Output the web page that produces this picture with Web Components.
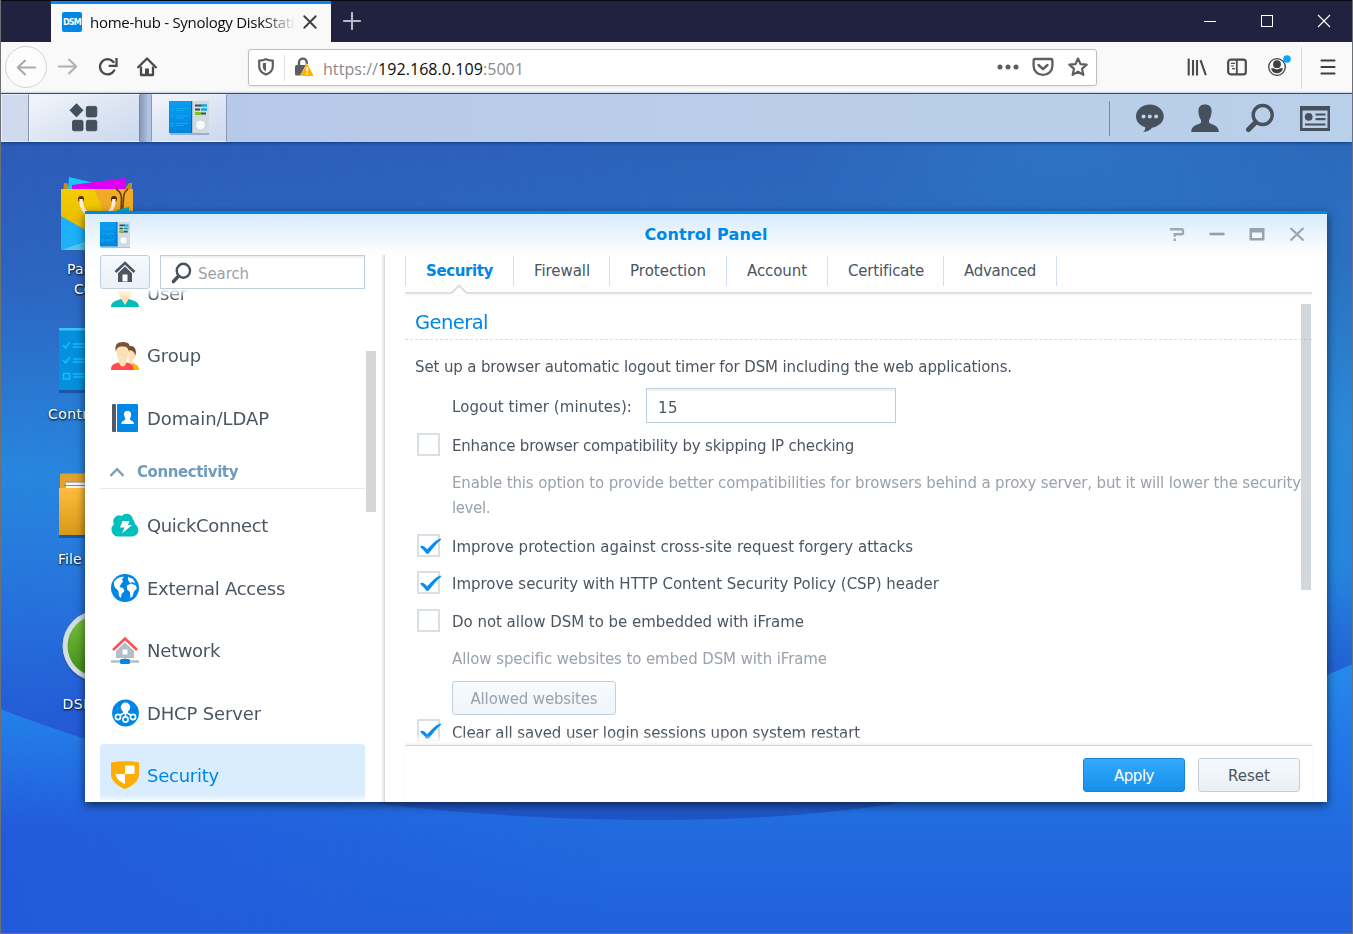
<!DOCTYPE html>
<html lang="en">
<head>
<meta charset="utf-8">
<title>home-hub - Synology DiskStation</title>
<style>
html,body{margin:0;padding:0;height:100%;overflow:hidden}
body{font-family:"DejaVu Sans",Verdana,sans-serif;background:#6d7075}
</style>
</head>
<body>
<browser-frame></browser-frame>
<script>
const make = (name, css, html) => customElements.define(name, class extends HTMLElement {
  connectedCallback() {
    if (this.shadowRoot) return;
    const root = this.attachShadow({ mode: 'open' });
    root.innerHTML = `<style>${css}</style>` + (typeof html === 'function' ? html(this) : html);
  }
});

/* ---------- icons ---------- */
const CP = `<defs><linearGradient id="g" x2="0" y2="1"><stop stop-color="#0b9cf0"/><stop offset="1" stop-color="#0086dd"/></linearGradient></defs>
<rect x="1" y="32" width="39" height="2" fill="#1e5f9a" opacity=".35"/><rect x="0" y="0" width="40" height="32" fill="#d3dade"/><rect x="0" y="0" width="23" height="32" fill="url(#g)"/><rect x="22" width="1.2" height="32" fill="#0667ae"/>
<path d="M2 8l1.500 1.500 2-3M2 15l1.500 1.500 2-3M2 22.500h3v3h-3zM7 7.500h13M7 9.500h9M7 15h12M7 17h8M7 22.500h12M7 24.500h8" stroke="#10b3f3" fill="none" stroke-width=".8"/>
<path d="M26 4.500h7M26 8.500h5M26 12.500h11" stroke="#3b4c55" stroke-width="2.200"/><path d="M32 4.500h6M32 8.500h6" stroke="#08a9ee" stroke-width="2.500"/><path d="M26 12.500h6" stroke="#6bd600" stroke-width="2.500"/><circle cx="31.500" cy="24" r="4.800" fill="#f4fbff" stroke="#bfcdd6" stroke-width=".6"/>`;
const ICONS = {
  back: [24,24,`<path d="M22 12H3M11 4l-8 8 8 8" fill="none" stroke="#a9a9aa" stroke-width="2.200" stroke-linecap="round" stroke-linejoin="round"/>`],
  fwd: [24,24,`<path d="M2 12h19M13 4l8 8-8 8" fill="none" stroke="#b1b1b3" stroke-width="2.200" stroke-linecap="round" stroke-linejoin="round"/>`],
  reload: [20,20,`<path d="M16.200 13.500A7.600 7.600 0 1 1 15.500 5" fill="none" stroke="#4a4a4d" stroke-width="2.400" stroke-linecap="round"/><path d="M18.500 1v7.800h-7.800" fill="none" stroke="#4a4a4d" stroke-width="2.300"/>`],
  home: [20,20,`<path d="M1.200 10.200L10 1.500l8.800 8.700" fill="none" stroke="#4a4a4d" stroke-width="2.300" stroke-linecap="round" stroke-linejoin="round"/><path d="M4 9.500V18h12V9.500" fill="none" stroke="#4a4a4d" stroke-width="2.300" stroke-linejoin="round"/><path d="M8 19v-7.500h4V19z" fill="#4a4a4d"/>`],
  shield: [16,18,`<path d="M8 1.100C6 2.300 3.600 2.600 1.200 2.600v5.600c0 4 2.300 6.600 6.800 8.400 4.500-1.800 6.800-4.400 6.800-8.400V2.600C12.400 2.600 10 2.300 8 1.100z" fill="none" stroke="#5e5e61" stroke-width="2.200" stroke-linejoin="round"/><path d="M8 4.700v8.700c-2-1.200-3.200-2.600-3.200-5V5.200z" fill="#5e5e61"/>`],
  lock: [20,20,`<path d="M5 9V5.500a3.900 3.900 0 0 1 7.800 0V8" fill="none" stroke="#5e5e61" stroke-width="2.400"/><rect x="1" y="8" width="12" height="10.500" rx="1.600" fill="#5e5e61"/><path d="M13 7.300L19 18.400H7.200z" fill="#ffb000" stroke="#fff" stroke-width="1.500" paint-order="stroke" stroke-linejoin="round"/><path d="M13 7.500L18.800 18.300H7.300z" fill="#ffb000" stroke="#ffb000" stroke-linejoin="round"/><path d="M13.100 10v4.400M13.100 15.800v1.500" stroke="#fff" stroke-width="1.600"/>`],
  dots: [22,6,`<circle cx="3" cy="3" r="2.500" fill="#5e5e61"/><circle cx="11" cy="3" r="2.500" fill="#5e5e61"/><circle cx="19" cy="3" r="2.500" fill="#5e5e61"/>`],
  pocket: [22,20,`<path d="M3 2h16a1.400 1.400 0 0 1 1.400 1.400V9A9.400 8.900 0 0 1 1.600 9V3.400A1.400 1.400 0 0 1 3 2z" fill="none" stroke="#5e5e61" stroke-width="2.300"/><path d="M6.500 8l4.500 4.200L15.500 8" fill="none" stroke="#5e5e61" stroke-width="2.400" stroke-linecap="round" stroke-linejoin="round"/>`],
  star: [22,22,`<path d="M11 2.400l2.500 5.700 6.200.6-4.700 4.100 1.400 6.100L11 15.700l-5.400 3.200L7 12.800 2.300 8.700l6.200-.6z" fill="none" stroke="#5e5e61" stroke-width="2.200" stroke-linejoin="round"/>`],
  library: [20,18,`<path d="M1.700.5v17M6 2v15.500M10 2v15.500M13.500 2.200l5.300 15" stroke="#4a4a4f" stroke-width="2.100" fill="none"/>`],
  sidebar: [20,18,`<rect x="1.200" y="1.700" width="17.600" height="14.600" rx="2.400" fill="none" stroke="#4a4a4f" stroke-width="2.200"/><path d="M9.800 2v14" stroke="#4a4a4f" stroke-width="1.800"/><path d="M4 5.300h4M4 8h3M5 10.700h3" stroke="#4a4a4f" stroke-width="1.200"/>`],
  account: [26,26,`<circle cx="11" cy="15" r="8.300" fill="none" stroke="#3f3f42" stroke-width="1.300"/><circle cx="11" cy="12.200" r="3.900" fill="#3f3f42"/><path d="M5 16.300h2.600c2 1.500 4.800 1.500 6.800 0H17c-.6 3.300-3 5-6 5s-5.400-1.700-6-5z" fill="#3f3f42"/><circle cx="21" cy="7" r="3.800" fill="#00a8fb"/>`],
  burger: [16,18,`<path d="M1.500 2.500h13M1.500 9h13M1.500 15.500h13" stroke="#3f3f42" stroke-width="2.200" stroke-linecap="round"/>`],
  x: [14,14,`<path d="M2 2l10 10M12 2L2 12" stroke="#3f3f42" stroke-width="1.700" stroke-linecap="round"/>`],
  plus: [18,18,`<path d="M9 1v16M1 9h16" stroke="#b8b9c3" stroke-width="2.100" stroke-linecap="round"/>`],
  min: [14,14,`<path d="M1 7.500h12" stroke="#fff"/>`],
  max: [14,14,`<rect x="1.500" y="1.500" width="11" height="11" fill="none" stroke="#fff"/>`],
  close: [14,14,`<path d="M1 1l12 12M13 1L1 13" stroke="#fff" stroke-width="1.100"/>`],
  apps: [30,30,`<g fill="#444f5c" stroke="#39434d" stroke-width=".8"><path d="M7.500.7L14 7.300 7.500 13.900 1 7.300z" stroke-linejoin="round"/><rect x="17.300" y="3.400" width="10.500" height="10.500" rx="1.600"/><rect x="3.500" y="17.300" width="10.500" height="10.500" rx="1.600"/><rect x="17.300" y="17.300" width="10.500" height="10.500" rx="1.600"/></g>`],
  cp: [40,34,CP],
  chat: [30,30,`<path d="M14.800 1.500C22.500 1.500 28.700 6.700 28.700 13.200c0 6-5 10.200-11.700 11.500-2 2.400-4.500 4-9 4.200 1.800-1.200 2.400-2.800 2.300-4.700C4.500 22.400 1 18.400 1 13.200 1 6.700 7.100 1.500 14.800 1.500z" fill="#46515d"/><g fill="#bfd1ea"><circle cx="8.500" cy="13.500" r="2"/><circle cx="14.800" cy="13.500" r="2"/><circle cx="21.100" cy="13.500" r="2"/></g>`],
  person: [30,30,`<path d="M15 1.500c4.500 0 7 2.600 6.600 7.300-.3 4.300-1.600 6.700-2.600 8.200v2.500c1.500 2.200 9.800 2.200 9.800 9.500H1.200c0-7.300 8.300-7.300 9.800-9.500V17c-1-1.500-2.300-3.900-2.600-8.200C8 4.100 10.500 1.500 15 1.500z" fill="#46515d"/>`],
  search: [30,30,`<circle cx="17.700" cy="12" r="9.500" fill="none" stroke="#46515d" stroke-width="3.400"/><path d="M10.500 19.500l-7 7" stroke="#46515d" stroke-width="5" stroke-linecap="round"/>`],
  widget: [32,28,`<path d="M1 2h30v25H1z" fill="#46515d"/><path d="M3.500 6.500h25v17.500h-25z" fill="#bfd1ea"/><circle cx="9.700" cy="12.800" r="3.900" fill="#46515d"/><path d="M16.500 10.500h10M16.500 15.200h10M6 20.500h20.500" stroke="#46515d" stroke-width="2.200"/>`],
  sHome: [22,22,`<path d="M1.500 11L11 2l9.500 9" fill="none" stroke="#4b5661" stroke-width="2.600"/><path d="M4 12l7-6.600 7 6.600v9H4z" fill="#4b5661"/><path d="M3.500 12.200L11 5l7.500 7.200" fill="none" stroke="#dfe5ea" stroke-width=".9"/><rect x="8.500" y="13.500" width="5" height="7" fill="#fff"/>`],
  user: [28,28,`<path d="M0 28c0-5 4-6 10-8h8c6 2 10 3 10 8z" fill="#00bfb8"/><path d="M7 9c0-6 14-6 14 0 0 6-2 8-3 10.500L14 26l-4-6.500C9 17 7 15 7 9z" fill="#ffdfb5"/><path d="M6 9C5 0 23 0 22 9c-2-4-14-4-16 0z" fill="#7a5335"/>`],
  group: [28,28,`<path d="M17 28h11c0-4-2-5-6-7l-5 2z" fill="#ffb400"/><path d="M17 8c6-2 8 1 7 6-.5 4-3 4-2.500 8L18 26z" fill="#ffdfb5"/><path d="M16 5c7-3 10 2 8.500 9-1-4-3-6-7.500-6z" fill="#714c30"/><path d="M0 28c0-5 2-6 8-7.500h8c5 1.500 6.500 2.500 6.500 7.500z" fill="#ff4b50"/><path d="M5.500 7c0-5 12-5 12 0 0 6-1 8-2 10.500.2 4-1.500 7-3.800 7s-4-3-4-7C6.500 15 5.500 13 5.500 7z" fill="#ffdfb5"/><path d="M5 10C3.500 4 5 0 12 0s8 4 6 10c-.8-4-2-5.500-6.500-5.500S5.500 6 5 10z" fill="#7a5335"/>`],
  domain: [28,28,`<rect x="1" width="4" height="28" rx="1" fill="#515b65"/><rect x="6" width="21" height="28" rx="1" fill="#0086e5"/><path d="M16.500 7c3 0 4.200 2 3.500 5-.4 1.500-1 2-1 3.500 1 1.500 4 1.200 4 4.500H10.300c0-3.300 3-3 4-4.500 0-1.500-.6-2-1-3.500C12.500 9 13.500 7 16.500 7z" fill="#fff"/>`],
  quick: [28,28,`<path d="M7 25.500a7 7 0 0 1-4-12.300A6 6 0 0 1 11 5c3-4 10-2.500 11 3.500 1.500 2 1.500 3 2 4.500 5.500 3.500 4 12.500-3 12.500z" fill="#00bfbd"/><path d="M11.500 10h7L17 14h4L11 22.500l2.500-6H9z" fill="#fff"/>`],
  globe: [28,28,`<circle cx="14" cy="14" r="14" fill="#0086e5"/><path d="M3 8C6 4 9 2.500 13 2.800L11 5.500l1 2-2 2.500-1.500 3 3.500 1 1.500 3-3 3-.5 4-2-2-.500-5-3.500-3.500L3 11zM17 3l5 2 2.500 4.500-3-1.500L19 9l-2-3zM16 11.500l4-2 5 2 .8 3-2.800 3-1.500 5-2 1.500-.5-6-3-2.500z" fill="#fff"/>`],
  network: [28,28,`<path d="M2 14L14 2.500 26 14" fill="none" stroke="#ff5054" stroke-width="2.600"/><path d="M5 15l9-8.500 9 8.500v7H5z" fill="#b2bec9"/><rect x="11.500" y="13.500" width="5" height="5" fill="#fff"/><path d="M14 22v3M0 25.500h28" stroke="#b2bec9" stroke-width="2.300"/><rect x="9" y="23" width="10" height="5" rx="1.500" fill="#0086e5"/>`],
  dhcp: [28,28,`<circle cx="14.500" cy="14" r="13.400" fill="#0086e5"/><circle cx="14.500" cy="8.300" r="4.700" fill="#fff"/><path d="M14.500 10v8M12.500 10l.3 4-4.300 2.500M16.500 10l-.3 4 4.300 2.500" fill="none" stroke="#fff" stroke-width="1.700"/><g fill="#0086e5" stroke="#fff" stroke-width="1.600"><circle cx="7" cy="18" r="2.600"/><circle cx="14.500" cy="20.500" r="2.600"/><circle cx="22" cy="18" r="2.600"/></g>`],
  security: [28,28,`<path d="M0 1.500C8-.3 20-.3 28 1.500V13c0 7-6 11.500-14 15C6 24.500 0 20 0 13z" fill="#ffad00"/><path d="M14 4.500h9.500V13H14z" fill="#fff"/><path d="M4.500 13H14v10C9 21 5.500 18 4.500 13z" fill="#fff"/>`],
  up: [16,10,`<path d="M1.500 8.800L8 2.200l6.500 6.600" fill="none" stroke="#7c9fbc" stroke-width="2.400"/>`],
  help: [16,16,`<path d="M1 3.200h11.500q1.500 0 1.500 1.300V7q0 1.300-1.500 1.300H5.700V10.800M5.700 12.600V15" fill="none" stroke="#9ba9b4" stroke-width="2.400"/>`],
  wmin: [16,16,`<path d="M.5 8h15" stroke="#93a0ac" stroke-width="2.600"/>`],
  wmax: [16,16,`<path d="M.5 2h15v12.500H.5z" fill="#97a4af"/><path d="M3 6.500h10v5.500H3z" fill="#eff6fc"/>`],
  wclose: [16,16,`<path d="M1.500 2l13 12.500M14.500 2l-13 12.500" stroke="#9ba9b4" stroke-width="2.400"/>`],
  bag: [74,76,`<defs><linearGradient id="b" x2="0" y2="1"><stop stop-color="#f5cd00"/><stop offset="1" stop-color="#e2b100"/></linearGradient></defs><path d="M4 6h3l2 4h57l3-4h3v10H3z" fill="#c58d16"/><path d="M9 0l34 8-35 5z" fill="#14c8fb"/><path d="M12 8L65 1l1 12H12z" fill="#de00f5"/><path d="M1 12h72v60H1z" fill="url(#b)"/><path d="M34 12h39v60H60z" fill="#f1aa26"/><path d="M1 39l40 23-40 11z" fill="#1db0fb"/><path d="M1 73l35-12h37v12z" fill="#55c8f0"/><circle cx="21" cy="22" r="3" fill="#4b2a08"/><circle cx="54" cy="22" r="3" fill="#4b2a08"/><path d="M21 22c0 25 33 25 33 0" fill="none" stroke="#fff1da" stroke-width="3.500"/><path d="M61 39c-1-12 4-22-5-27M61 39c5-14-1-21 7-27" stroke="#5e3d08" stroke-width="1.500" fill="none"/><path d="M57 33l12-3v10H57z" fill="#08a8cc"/>`],
  bigcp: [76,66,`<rect y="62" width="76" height="3" fill="#133f8c" opacity=".6"/><rect width="44" height="62" fill="#0590df"/><rect x="44" width="32" height="62" fill="#d3dade"/><rect width="76" height="2.500" fill="#38c3ff"/><path d="M4 17l2.500 3L11 14M4 32l2.500 3L11 29M4.500 45.500h6v5.500h-6zM14 16h20M14 19h15M14 31h20M14 34h15M14 46h20M14 49h15" fill="none" stroke="#11bffa" stroke-width="1.500"/>`],
  folder: [76,66,`<rect y="62" width="76" height="3" fill="#133f8c" opacity=".6"/><path d="M1 2q0-1.500 1.500-1.500H30l4 8h40V20H1z" fill="#e2a22b"/><path d="M7 9h64v9H7z" fill="#f5f5f5"/><path d="M7 9h64M5 12.500h66" stroke="#8b8b8b" stroke-width="1"/><defs><linearGradient id="f" x2="0" y2="1"><stop stop-color="#ffbd3c"/><stop offset="1" stop-color="#d79919"/></linearGradient></defs><path d="M0 15h76v47H0z" fill="url(#f)"/>`],
  ds: [74,74,`<defs><linearGradient id="d" x2="0" y2="1"><stop stop-color="#78c13a"/><stop offset="1" stop-color="#3e8d1c"/></linearGradient></defs><circle cx="37" cy="38" r="36" fill="#1a438f" opacity=".4"/><circle cx="37" cy="36" r="35.500" fill="#d3dde9"/><circle cx="37" cy="36" r="30.500" fill="url(#d)"/>`],
  check: [23,16,`<path d="M1 8.800c1.500-1.500 3-1.300 4.500 0l2.700 2.500C12.500 6.500 16 2.500 20.500.7c1.500-.2 2 .3 1.500 1-4.500 3.700-8.500 9-12.500 14.100H7.300C5.500 13 3.500 11 1 8.800z" fill="#0a8df0"/>`]
};
make('x-icon', `:host{display:inline-flex;flex:none}svg{display:block}`, el => {
  const [w, h, body] = ICONS[el.getAttribute('name')];
  return `<svg width="${el.getAttribute('w') || w}" height="${el.getAttribute('h') || h}" viewBox="0 0 ${w} ${h}" preserveAspectRatio="none">${body}</svg>`;
});

/* ---------- browser chrome ---------- */
make('browser-frame', `:host{display:flex;flex-direction:column;width:1351px;height:933px;margin:0 1px 1px;overflow:hidden;box-sizing:border-box}`,
 `<tab-strip></tab-strip><nav-bar></nav-bar><dsm-taskbar></dsm-taskbar><dsm-desktop></dsm-desktop>`);

make('tab-strip', `
:host{display:flex;height:42px;box-sizing:border-box;background:#20223f;border-top:1px solid #08080f;padding-left:50px;font-family:"Open Sans","Noto Sans",sans-serif}
.tab{width:280px;box-sizing:border-box;background:#f9f9fa;border-top:3px solid #0a84ff;display:flex;align-items:center;padding:0 12px 2px 11px}
.fav{width:20px;height:20px;border-radius:2px;background:#0086e5;color:#fff;font:bold 8px "DejaVu Sans",sans-serif;display:flex;align-items:center;justify-content:center;margin-right:8px}
.t{width:208px;overflow:hidden;white-space:nowrap;font-size:15px;color:#0c0c0d;-webkit-mask:linear-gradient(90deg,#000 172px,transparent 206px);line-height:24px}
.tab x-icon{margin-left:4px}
.new{margin:11px 0 0 12px}.w{margin-left:auto;display:flex;gap:43px;padding:13px 21px 0 0}`,
`<div class="tab"><span class="fav"><fit-text w="18">DSM</fit-text></span><span class="t"><fit-text w="222">home-hub - Synology DiskStation</fit-text></span><x-icon name="x" w="16" h="16"></x-icon></div><x-icon class="new" name="plus"></x-icon>
<div class="w"><x-icon name="min"></x-icon><x-icon name="max"></x-icon><x-icon name="close"></x-icon></div>`);

make('nav-bar', `
:host{display:flex;align-items:center;height:51px;background:#f9f9fa;font-family:"Open Sans","Noto Sans",sans-serif;padding-left:4px;box-sizing:border-box}
:host>x-icon,.url x-icon,.r x-icon{margin-bottom:2px}
.back{width:40px;height:40px;border:1px solid #d4d4d6;border-radius:50%;display:flex;align-items:center;justify-content:center;background:#fcfcfc;margin-bottom:1px}
.url{margin-left:91px;width:849px;height:37px;box-sizing:border-box;border:1px solid #bfbfc1;border-radius:3px;background:#fff;display:flex;align-items:center;box-shadow:0 1px 3px #0001;padding:0 9px}
.sep{width:1px;height:26px;background:#dedee0;margin:0 9px 0 10px}
.a{font-size:16px;color:#8a8a8d;margin-left:9px;padding-top:3px}b{font-weight:400;color:#0c0c0d}
.r{display:flex;margin-left:auto;align-items:center}
.v{width:1px;height:42px;background:#d9d9db}`,
`<span class="back"><x-icon name="back" w="22" h="21"></x-icon></span><x-icon name="fwd" w="22" h="21" style="margin:0 19px 2px 10px"></x-icon><x-icon name="reload" style="margin:0 19px 2px 0"></x-icon><x-icon name="home" style="margin-bottom:2px"></x-icon>
<div class="url"><x-icon name="shield"></x-icon><i class="sep"></i><x-icon name="lock"></x-icon><span class="a"><fit-text w="201">https://<b>192.168.0.109</b>:5001</fit-text></span>
<div class="r"><x-icon name="dots"></x-icon><x-icon name="pocket" style="margin:0 13px 2px 13px"></x-icon><x-icon name="star" style="margin-right:-2px"></x-icon></div></div>
<div class="r"><x-icon name="library"></x-icon><x-icon name="sidebar" style="margin:0 19px 2px 20px"></x-icon><x-icon name="account" style="margin:0 0 6px"></x-icon><i class="v" style="margin:0 18px 0 9px"></i><x-icon name="burger" style="margin-right:16px"></x-icon></div>`);

/* ---------- DSM ---------- */
make('dsm-taskbar', `
:host{display:flex;height:49px;box-sizing:border-box;border-top:1px solid #2a4f8f;background:linear-gradient(90deg,#b6c7e8,#bacde9 55%,#b9d0ea);position:relative;z-index:1;box-shadow:0 1px 3px #123a80}
i{display:block;box-sizing:border-box}.s{width:28px;background:#cfdaee;border:1px solid #e6edf8;border-right:1px solid #8494b3}
.apps,.cp{box-sizing:border-box;display:flex;align-items:center;justify-content:center;background:linear-gradient(155deg,#f4f6fb,#dfe7f4 45%,#cbd8ee);border:1px solid #eff3fb}
.apps{width:111px;padding-right:2px;border-right:1px solid #7787a5}.gap{width:11px;background:linear-gradient(90deg,#8898b5,#b3c5e5 80%)}
.cp{width:76px;border-right:1px solid #8b9ab8;border-left-color:#8b9ab8}
.r{margin-left:auto;display:flex;align-items:center;gap:25px;padding-right:21px}.v{width:1px;height:35px;background:#7a8ba6}`,
`<i class="s"></i><div class="apps"><x-icon name="apps"></x-icon></div><i class="gap"></i><div class="cp"><x-icon name="cp"></x-icon></div>
<div class="r"><i class="v"></i><x-icon name="chat"></x-icon><x-icon name="person"></x-icon><x-icon name="search"></x-icon><x-icon name="widget" style="margin-left:-1px"></x-icon></div>`);

make('wall-paper', `:host{display:block;position:absolute;inset:0}svg{display:block}`,
`<svg width="1351" height="791" viewBox="1 142 1351 791"><defs>
<linearGradient id="a" x2="0" y2="1"><stop stop-color="#2d5bb8"/><stop offset=".18" stop-color="#2c66c2"/><stop offset=".42" stop-color="#2886de"/><stop offset=".56" stop-color="#2775dd"/><stop offset=".75" stop-color="#2459d6"/><stop offset="1" stop-color="#1f4dbd"/></linearGradient>
<linearGradient id="a2" x2="0" y2="1"><stop stop-color="#2c6abb"/><stop offset=".15" stop-color="#2b70c0"/><stop offset=".36" stop-color="#2a89d7"/><stop offset=".54" stop-color="#2585de"/><stop offset=".67" stop-color="#2160d2"/><stop offset="1" stop-color="#1c4cb4"/></linearGradient>
<linearGradient id="m"><stop stop-color="#000"/><stop offset="1" stop-color="#fff"/></linearGradient><mask id="k"><rect y="140" width="1353" height="800" fill="url(#m)"/></mask>
<radialGradient id="t" cx="1060" cy="145" r="270" gradientUnits="userSpaceOnUse" gradientTransform="matrix(1 0 0 .5 0 72)"><stop stop-color="#3180cf" stop-opacity=".45"/><stop offset="1" stop-color="#3180cf" stop-opacity="0"/></radialGradient>
<linearGradient id="c" gradientUnits="userSpaceOnUse" x1="0" y1="670" x2="0" y2="933"><stop stop-color="#2589ea"/><stop offset=".25" stop-color="#2379e8"/><stop offset=".6" stop-color="#216bdf"/><stop offset="1" stop-color="#2161da"/></linearGradient>
<linearGradient id="l" gradientUnits="userSpaceOnUse" x1="0" y1="700" x2="0" y2="830"><stop stop-color="#2485ea"/><stop offset="1" stop-color="#235adb"/></linearGradient>
<linearGradient id="n" gradientUnits="userSpaceOnUse" x1="0" x2="600" y1="0" y2="0"><stop stop-color="#fff"/><stop offset="1" stop-color="#000"/></linearGradient><mask id="q"><rect y="640" width="1353" height="300" fill="url(#n)"/></mask></defs>
<rect y="142" width="1353" height="792" fill="url(#a)"/><rect y="142" width="1353" height="792" fill="url(#a2)" mask="url(#k)"/><rect y="142" width="1353" height="300" fill="url(#t)"/>
<path d="M0 709C200 785 400 820 665 820S1130 760 1353 664V934H0z" fill="url(#c)"/><path d="M0 709C200 785 400 820 665 820V934H0z" fill="url(#l)" mask="url(#q)"/></svg>`);

make('desk-icon', `:host{display:flex;flex-direction:column;align-items:center;width:110px;height:145px;box-sizing:border-box}
.l{color:#fff;font-size:14px;line-height:20px;text-align:center;text-shadow:0 1px 2px #000a,1px 1px 2px #0008}.i{height:82px;display:flex;align-items:flex-start;flex:none}
:host([low]) .i{height:76px;padding-top:6px}`,
 el => `<div class="i"><x-icon name="${el.getAttribute('icon')}"></x-icon></div><div class="l"><slot></slot></div>`);

make('dsm-desktop', `:host{display:block;position:relative;flex:1;overflow:hidden}
.icons{position:absolute;left:41px;top:35px;display:flex;flex-direction:column}
.ds{margin:-2px 0 0 1px}.ds fit-text{padding-top:2px}
control-panel{position:absolute;left:84px;top:69px}`,
`<wall-paper></wall-paper><div class="icons">
<desk-icon icon="bag"><fit-text w="60">Package</fit-text><br><fit-text w="46">Center</fit-text></desk-icon>
<desk-icon icon="bigcp" low><fit-text w="98">Control Panel</fit-text></desk-icon>
<desk-icon icon="folder" low><fit-text w="78">File Station</fit-text></desk-icon>
<desk-icon class="ds" icon="ds"><fit-text w="71">DSM Help</fit-text></desk-icon></div><control-panel></control-panel>`);

make('control-panel', `:host{display:flex;flex-direction:column;width:1242px;height:591px;box-sizing:border-box;border-top:3px solid #0086e5;background:linear-gradient(#d8ebfb,#fff 41px);box-shadow:0 3px 9px #0009;color:#4b5661}
.bar{height:41px;display:grid;grid-template-columns:1fr auto 1fr;align-items:center;padding:0 22px 0 15px;flex:none}
.t{font-weight:700;font-size:16px;color:#0086e5;margin-left:7px}
.w{display:flex;justify-content:flex-end;gap:24px;padding-bottom:2px}
.body{flex:1;display:flex;min-height:0}`,
`<div class="bar"><x-icon name="cp" w="30" h="26"></x-icon><span class="t"><fit-text w="123">Control Panel</fit-text></span><span class="w"><x-icon name="help"></x-icon><x-icon name="wmin"></x-icon><x-icon name="wmax"></x-icon><x-icon name="wclose"></x-icon></span></div>
<div class="body"><side-bar></side-bar><settings-pane></settings-pane></div>`);

make('nav-item', `:host{display:flex;align-items:center;height:62.5px;padding-left:11px;box-sizing:border-box;font-size:18px;border-radius:4px;flex:none}
:host([active]){background:#d9edff;color:#0086e5}x-icon{margin-right:8px}:host([low]){padding-top:2px}:host([low]) x-icon{margin-bottom:1.500px}`,
 el => `<x-icon name="${el.getAttribute('icon')}"></x-icon><slot></slot>`);

make('side-bar', `:host{display:flex;flex-direction:column;width:300px;box-sizing:border-box;padding-left:15px;position:relative;border-right:1px solid #d9dadb;box-shadow:inset -4px 0 3px -3px #0002;flex:none}
.top{display:flex;gap:10px;height:34px;flex:none}
.h{width:50px;box-sizing:border-box;border:1px solid #c0cfdd;border-radius:3px;background:linear-gradient(#f6fafe,#eaf1f7);display:flex;align-items:center;justify-content:center}
.s{width:205px;box-sizing:border-box;border:1px solid #c0cfdd;box-shadow:inset 0 2px #f0f1f2;background:#fff;display:flex;align-items:center;padding:3px 0 0 10px;gap:6px;font-size:15px;color:#9aa3ad}
.s x-icon{margin-bottom:2px}
.list{width:265px;flex:1;min-height:0;overflow:hidden;display:flex;flex-direction:column;-webkit-mask:linear-gradient(transparent,#000 9px calc(100% - 7px),transparent 100%)}
.list nav-item:first-child{margin-top:-27px}
.c{height:39px;box-sizing:border-box;border-bottom:1px solid #e5eaf0;flex:none;margin-bottom:5px;display:flex;align-items:center;padding:6px 0 0 9px;gap:12px;font-size:15px;font-weight:700;color:#6f9cbd}
.sb{position:absolute;left:281px;top:96px;width:10px;height:161px;background:#d4d6d8}`,
`<div class="top"><span class="h"><x-icon name="sHome"></x-icon></span><span class="s"><x-icon name="search" w="21" h="22"></x-icon><fit-text w="51">Search</fit-text></span></div>
<div class="list"><nav-item icon="user"><fit-text w="40">User</fit-text></nav-item><nav-item icon="group"><fit-text w="54">Group</fit-text></nav-item><nav-item icon="domain"><fit-text w="122">Domain/LDAP</fit-text></nav-item>
<div class="c"><x-icon name="up"></x-icon><fit-text w="101">Connectivity</fit-text></div>
<nav-item low icon="quick"><fit-text w="121">QuickConnect</fit-text></nav-item><nav-item low icon="globe"><fit-text w="138">External Access</fit-text></nav-item><nav-item low icon="network"><fit-text w="73">Network</fit-text></nav-item><nav-item low icon="dhcp"><fit-text w="114">DHCP Server</fit-text></nav-item><nav-item low icon="security" active><fit-text w="72">Security</fit-text></nav-item></div><i class="sb"></i>`);

make('tab-bar', `:host{display:flex;height:39px;box-sizing:border-box;position:relative;border-bottom:2px solid #dfe0e1;box-shadow:0 2px 2px #00000008;font-size:15px;flex:none}
span{height:30px;margin-top:1px;border-right:1px solid #d3dfea;box-sizing:border-box;padding:0 0 1px 20px;display:flex;align-items:center}
span:first-of-type{border-left:1px solid #d3dfea}.on{color:#0086e5;font-weight:700}
svg{position:absolute;left:46px;bottom:-3px}`,
`<span class="on" style="width:109px"><fit-text w="67">Security</fit-text></span><span style="width:96px"><fit-text w="56">Firewall</fit-text></span><span style="width:117px"><fit-text w="76">Protection</fit-text></span><span style="width:101px"><fit-text w="60">Account</fit-text></span><span style="width:116px"><fit-text w="76">Certificate</fit-text></span><span style="width:113px"><fit-text w="72">Advanced</fit-text></span>
<svg width="17" height="11"><path d="M0 9L8 1l8 8v2H0z" fill="#fff"/><path d="M0 9.500L8 1.500l8 8" fill="none" stroke="#dcddde" stroke-width="2"/></svg>`);

make('check-row', `:host{display:flex;align-items:center;height:37px;flex:none}
.b{width:23px;height:23px;box-sizing:border-box;border:2px solid #d8dfe6;background:#fff;margin:0 12px 2px 2px;display:flex}
:host([last]) .b{margin-bottom:4px}
x-icon{margin:2px -4px 0 0}`,
 el => `<span class="b">${el.hasAttribute('checked') ? '<x-icon name="check"></x-icon>' : ''}</span><slot></slot>`);

make('dsm-button', `:host{display:flex;align-items:center;justify-content:center;box-sizing:border-box;height:34px;border:1px solid #c0cfdd;border-radius:3px;background:linear-gradient(#f6fafe,#e9eff4);flex:none;padding-top:1px}
:host([primary]){background:linear-gradient(#33a9ff,#1890ea);border-color:#1784d8;color:#fff}:host([off]){color:#98a2ac;background:linear-gradient(#f8fbfe,#f0f5f9)}`, `<slot></slot>`);

make('settings-pane', `:host{display:flex;flex-direction:column;width:907px;margin-left:20px;font-size:15px;position:relative}
.f{flex:none;height:449px;overflow:hidden;display:flex;flex-direction:column;padding:10px 0 0 10px;box-sizing:border-box;-webkit-mask:linear-gradient(#000 calc(100% - 8px),transparent)}
h2{margin:0 0 0 -10px;padding-left:10px;font-size:19.500px;font-weight:400;color:#0086e5;height:36px;line-height:38px;box-sizing:border-box;border-bottom:1px dashed #d3dde6;flex:none}
.p{margin-top:13px;height:28px;display:flex;align-items:center;flex:none}
.lo{margin:7px 0 4px 37px;display:flex;height:35px;align-items:center;flex:none;gap:14px}
.lo>fit-text{padding-top:2px}
.in{width:250px;height:35px;box-sizing:border-box;border:1px solid #c0cfdd;box-shadow:inset 0 2px #f0f1f2;display:flex;align-items:center;padding:5px 0 0 11px}
.n{color:#9aa2ab;margin-left:37px;line-height:25px;flex:none}
.foot{border-top:1px solid #d6d7d8;box-shadow:0 -2px 2px #0000000d;flex:1;display:flex;justify-content:flex-end;gap:13px;padding:12px 12px 0 0;margin-top:2px}
.sb{position:absolute;left:896px;top:49px;width:10px;height:286px;background:#a9aeb37f}`,
`<tab-bar></tab-bar><div class="f"><h2><fit-text w="73">General</fit-text></h2>
<div class="p"><fit-text w="597">Set up a browser automatic logout timer for DSM including the web applications.</fit-text></div>
<div class="lo"><fit-text w="180">Logout timer (minutes):</fit-text><span class="in"><fit-text w="20">15</fit-text></span></div>
<check-row><fit-text w="402">Enhance browser compatibility by skipping IP checking</fit-text></check-row>
<div class="n" style="margin-top:7px"><fit-text w="849">Enable this option to provide better compatibilities for browsers behind a proxy server, but it will lower the security</fit-text><br><fit-text w="38">level.</fit-text></div>
<check-row checked style="margin-top:7px"><fit-text w="461">Improve protection against cross-site request forgery attacks</fit-text></check-row>
<check-row checked><fit-text w="487">Improve security with HTTP Content Security Policy (CSP) header</fit-text></check-row>
<check-row style="margin-top:1px"><fit-text w="352">Do not allow DSM to be embedded with iFrame</fit-text></check-row>
<div class="n" style="margin-top:7px"><fit-text w="375">Allow specific websites to embed DSM with iFrame</fit-text></div>
<dsm-button off style="width:164px;margin:9px 0 0 37px"><fit-text w="127">Allowed websites</fit-text></dsm-button>
<check-row checked last style="margin-top:-1px"><fit-text w="408">Clear all saved user login sessions upon system restart</fit-text></check-row></div>
<div class="foot"><dsm-button primary style="width:102px"><fit-text w="40">Apply</fit-text></dsm-button><dsm-button style="width:102px"><fit-text w="42">Reset</fit-text></dsm-button></div><i class="sb"></i>`);

/* Single-line text whose tracking is adjusted so that it spans a given width. */
customElements.define('fit-text', class extends HTMLElement {
  connectedCallback() {
    if (this.shadowRoot) return;
    this.attachShadow({ mode: 'open' }).innerHTML = `<style>:host{display:inline-block;white-space:pre;flex:none}</style><slot></slot>`;
    const w = +this.getAttribute('w'), n = this.textContent.length;
    this.style.letterSpacing = (w - this.getBoundingClientRect().width) / n + 'px';
  }
});
</script>
</body>
</html>
